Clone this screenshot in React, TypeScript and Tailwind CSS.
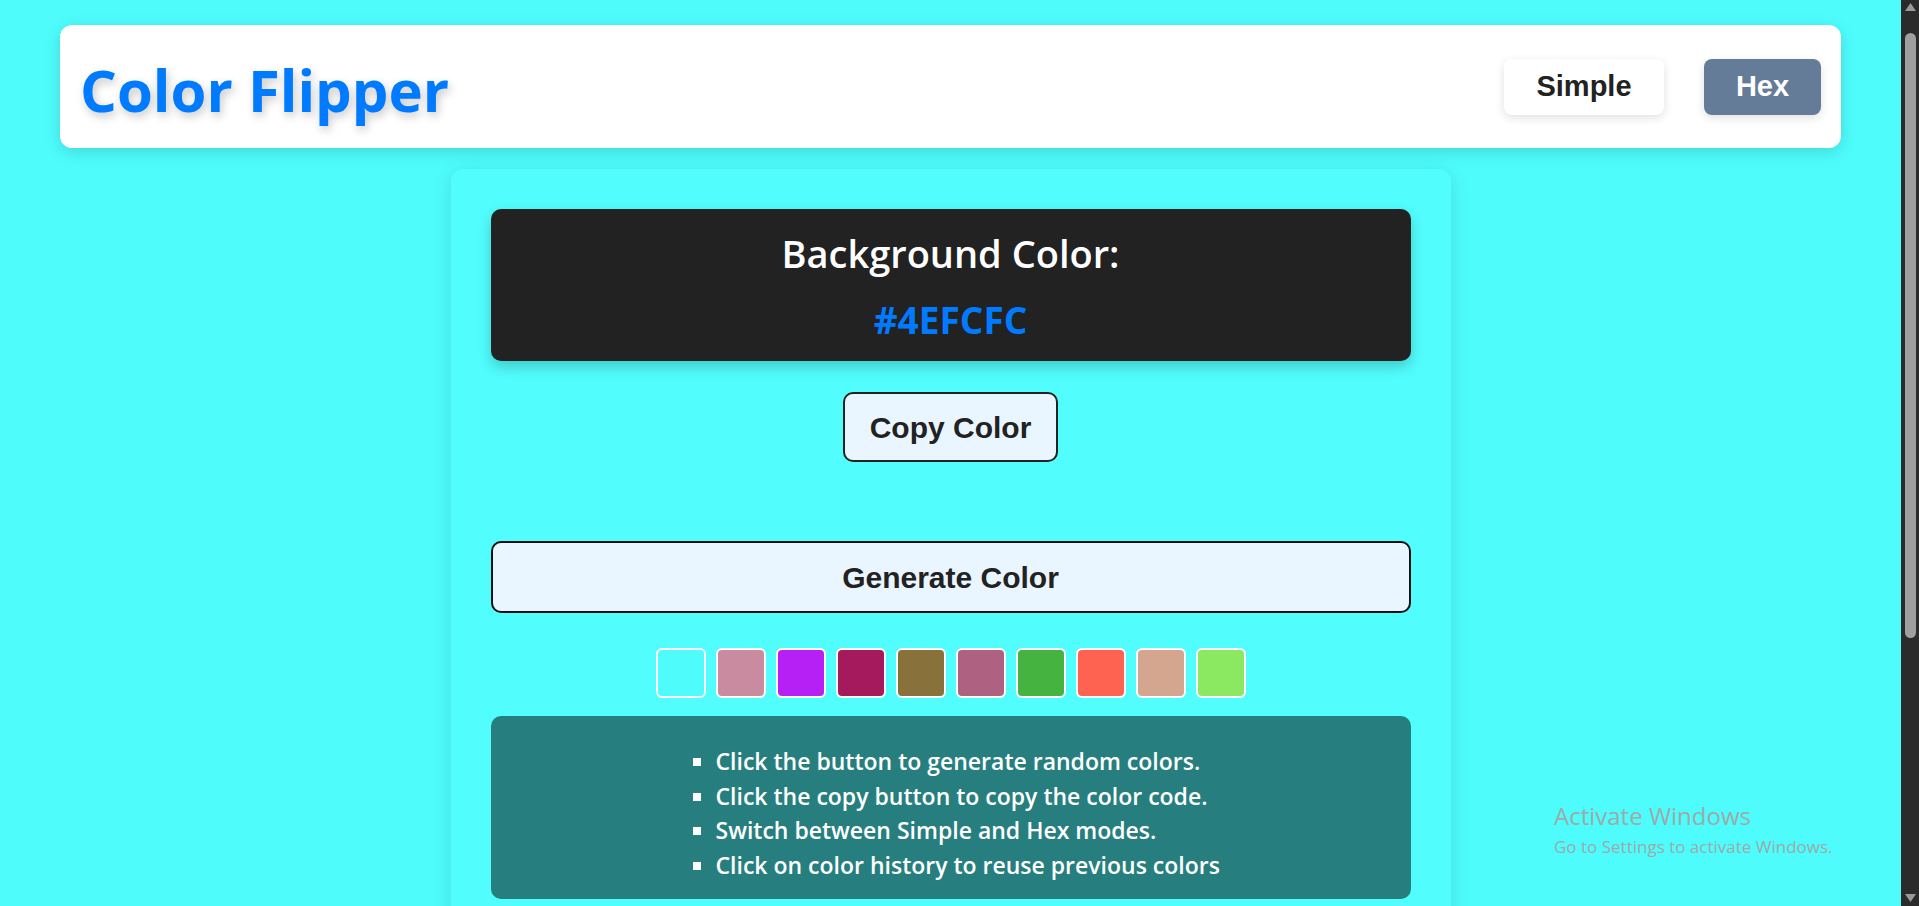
import React from 'react';

const swatches = [
  '#4efcfc',
  '#c98ba0',
  '#b720f5',
  '#a51a5c',
  '#88713b',
  '#ae6180',
  '#44b340',
  '#fe6250',
  '#d4a68f',
  '#8be861',
];

const tips = [
  'Click the button to generate random colors.',
  'Click the copy button to copy the color code.',
  'Switch between Simple and Hex modes.',
  'Click on color history to reuse previous colors',
];

const Scrollbar: React.FC = () => (
  <div className="flex w-[18px] shrink-0 flex-col items-center bg-[#2b2b2b]">
    <svg className="mt-[3px] h-[8px] w-[11px]" viewBox="0 0 11 8">
      <polygon points="5.5,0 11,8 0,8" fill="#9a9a9a" />
    </svg>
    <div className="mt-[22px] h-[605px] w-[11px] rounded-full bg-[#9f9f9f]" />
    <div className="flex-1" />
    <svg className="mb-[4px] h-[8px] w-[11px]" viewBox="0 0 11 8">
      <polygon points="0,0 11,0 5.5,8" fill="#9a9a9a" />
    </svg>
  </div>
);

const App: React.FC = () => {
  return (
    <div className="flex h-[906px] w-full overflow-hidden bg-[#4efcfc]">
      <div className="relative flex-1 overflow-hidden">
        <header className="mx-[60px] mt-[25px] flex h-[123px] items-center justify-between rounded-xl bg-white px-5 shadow-[0_4px_16px_rgba(0,0,0,0.15)]">
          <h1 className="mt-[6px] font-['Open_Sans',sans-serif] text-[58px] font-bold text-[#007bff] [text-shadow:2px_4px_10px_rgba(0,0,0,0.22)]">
            Color Flipper
          </h1>
          <div className="flex gap-10 font-['Liberation_Sans',Arial,sans-serif] text-[29px] font-bold">
            <button className="h-[56px] w-[160px] rounded-lg bg-white text-[#222] shadow-[0_3px_10px_rgba(0,0,0,0.12)]">
              Simple
            </button>
            <button className="h-[56px] w-[117px] rounded-lg bg-[#647c97] text-white shadow-[0_3px_10px_rgba(0,0,0,0.12)]">
              Hex
            </button>
          </div>
        </header>

        <main className="mx-auto mt-[21px] w-[1000px] rounded-xl bg-[#51fdfd] px-10 pt-10 pb-10 shadow-[0_4px_20px_rgba(0,0,0,0.12)]">
          <div className="flex h-[152px] flex-col items-center rounded-[10px] bg-[#222] pt-[20px] font-['Open_Sans',sans-serif] shadow-[0_6px_14px_rgba(0,0,0,0.2)]">
            <h2 className="text-[38px] font-semibold leading-[48px] text-white">Background Color:</h2>
            <span className="mt-[21px] text-[37px] font-bold leading-[44px] text-[#007bff]">#4EFCFC</span>
          </div>

          <div className="mt-[31px] flex justify-center">
            <button className="h-[70px] w-[215px] rounded-[10px] border-2 border-[#222] bg-[#eaf6ff] font-['Liberation_Sans',Arial,sans-serif] text-[30px] font-bold text-[#222]">
              Copy Color
            </button>
          </div>

          <button className="mt-[79px] h-[72px] w-full rounded-[10px] border-2 border-[#111] bg-[#eaf6ff] font-['Liberation_Sans',Arial,sans-serif] text-[30px] font-bold text-[#222]">
            Generate Color
          </button>

          <div className="mt-[35px] flex justify-center gap-[10px]">
            {swatches.map((c) => (
              <div
                key={c}
                className="h-[50px] w-[50px] rounded-[6px] border-2 border-white"
                style={{ backgroundColor: c }}
              />
            ))}
          </div>

          <div className="mt-[18px] rounded-[10px] bg-[#267f7e] pt-[28px] pb-[17px] pl-[225px] font-['Open_Sans',sans-serif] text-[23px] font-semibold leading-[34.5px] text-white">
            <ul className="list-[square]">
              {tips.map((t) => (
                <li key={t}>{t}</li>
              ))}
            </ul>
          </div>
        </main>

        <div className="absolute left-[1554px] top-[800px] font-['Open_Sans',sans-serif] text-[#9eaaaa]">
          <div className="text-[24px] leading-[32px]">Activate Windows</div>
          <div className="mt-[5px] text-[17px] leading-[20px]">Go to Settings to activate Windows.</div>
        </div>
      </div>
      <Scrollbar />
    </div>
  );
};

export default App;
